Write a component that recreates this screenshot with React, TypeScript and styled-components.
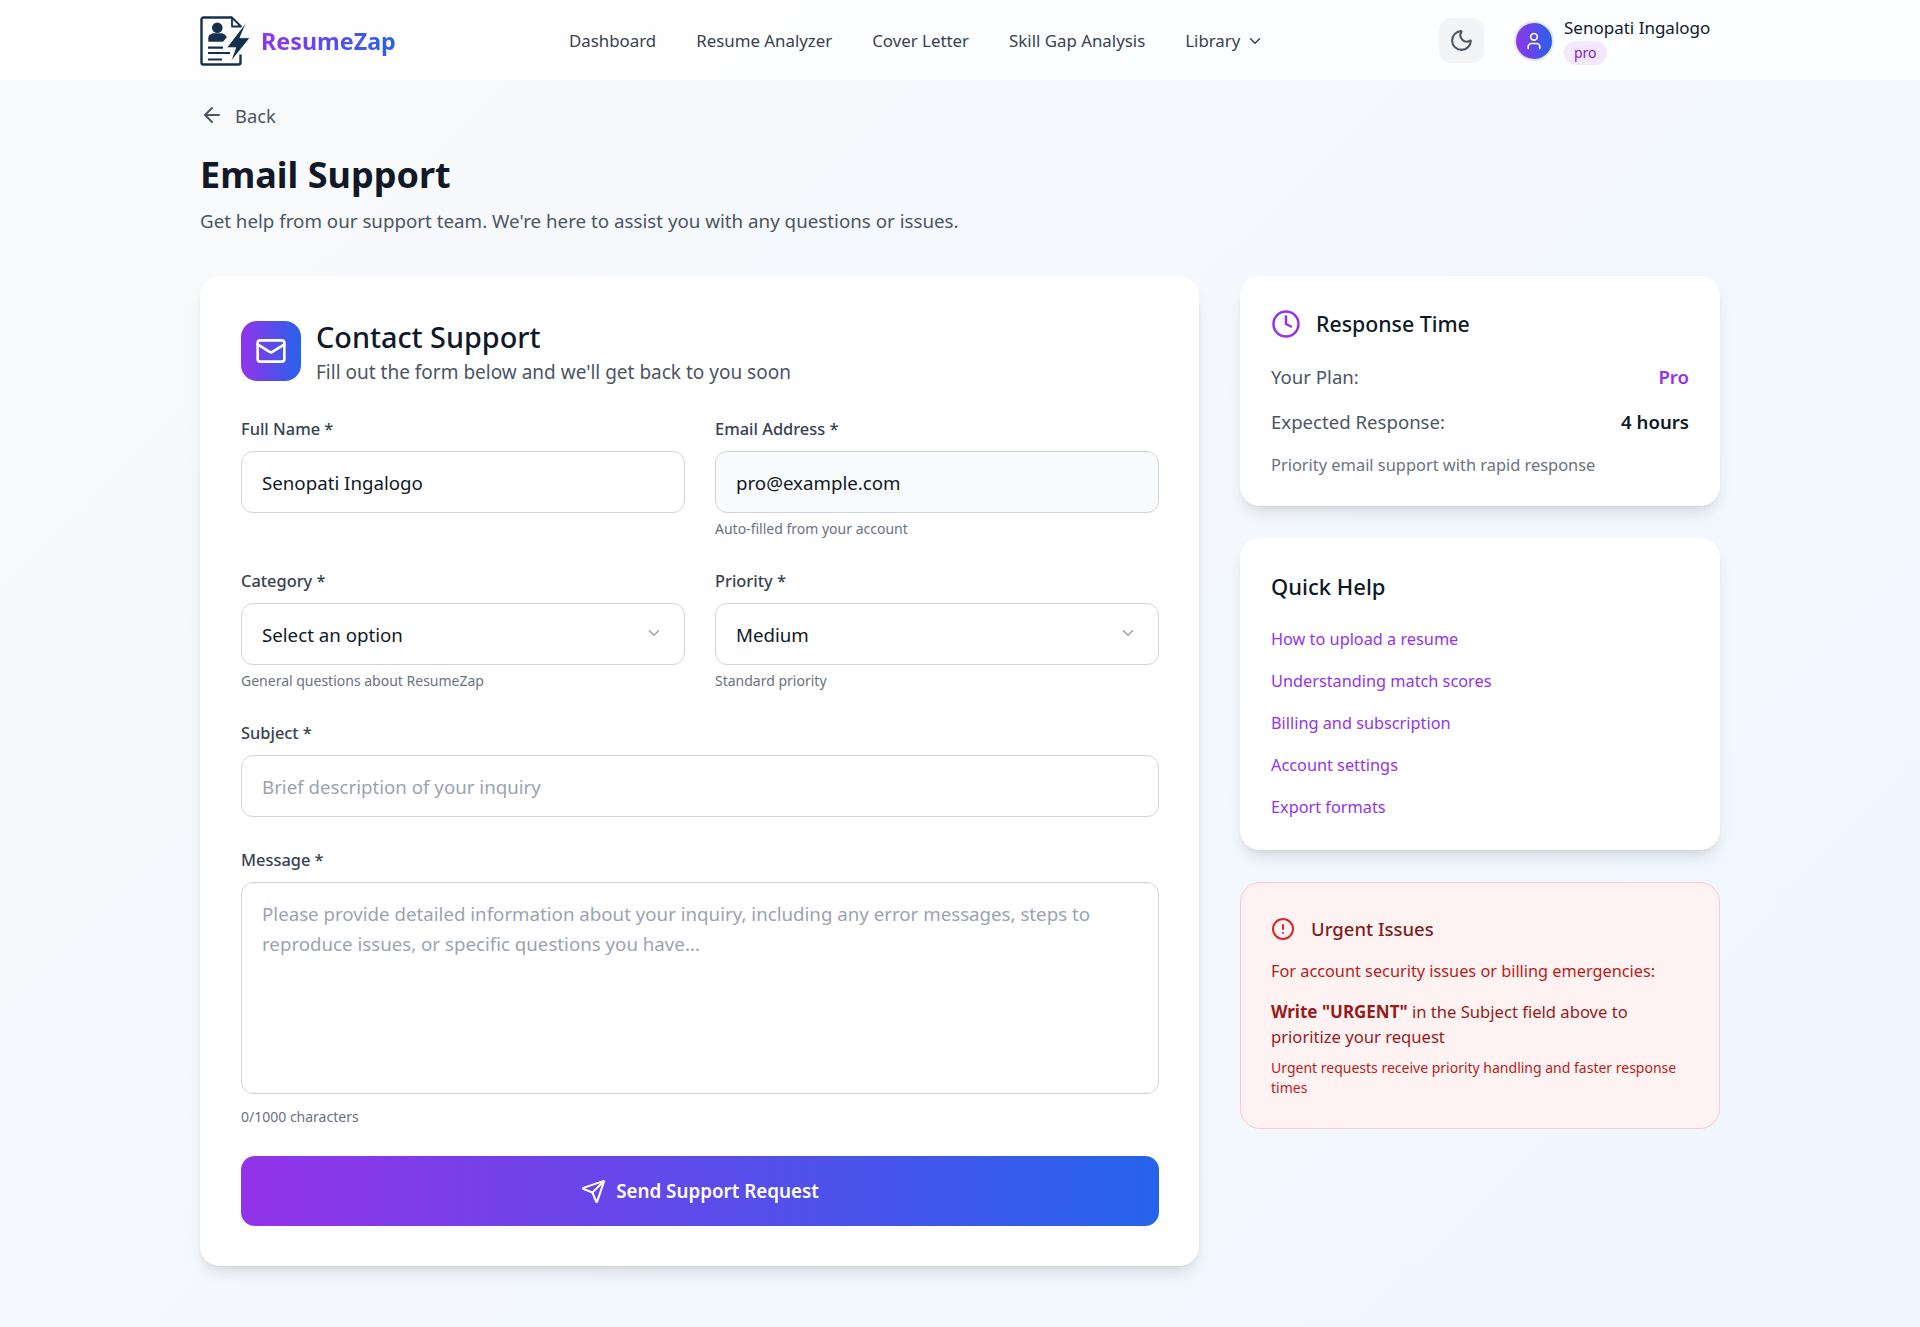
import styled, { createGlobalStyle } from 'styled-components';
import { ArrowLeft, ChevronDown, CircleAlert, Clock, Mail, Moon, Send, User } from 'lucide-react';

const GlobalStyle = createGlobalStyle`
  * { box-sizing: border-box; }
  body {
    margin: 0;
    font-family: 'Noto Sans', 'Open Sans', Arial, sans-serif;
    color: #111827;
  }
`;

const Page = styled.div`
  min-height: 1327px;
  background: linear-gradient(135deg, #f9fafb 0%, #eff6ff 100%);
`;

const Header = styled.header`
  height: 80px;
  background: rgba(255, 255, 255, 0.8);
  display: flex;
  align-items: center;
  padding: 1px 200px 0;
`;

const LogoLink = styled.a`
  display: flex;
  align-items: center;
  gap: 11px;
  width: 369px;
`;

const LogoText = styled.span`
  font-size: 23.3px;
  font-weight: 700;
  background: linear-gradient(90deg, #9333ea, #2563eb);
  -webkit-background-clip: text;
  background-clip: text;
  color: transparent;
`;

const Nav = styled.nav`
  display: flex;
  align-items: center;
  gap: 40px;
  flex: 1;
`;

const NavItem = styled.a`
  display: flex;
  align-items: center;
  gap: 6px;
  font-size: 16.85px;
  color: #374151;
`;

const ThemeButton = styled.button`
  width: 45px;
  height: 45px;
  margin-top: -1px;
  border: none;
  border-radius: 12px;
  background: #f3f4f6;
  color: #4b5563;
  display: flex;
  align-items: center;
  justify-content: center;
  margin-right: 30px;
`;

const UserBox = styled.div`
  display: flex;
  align-items: center;
  gap: 10px;
  width: 206px;
`;

const Avatar = styled.div`
  width: 40px;
  height: 40px;
  border-radius: 50%;
  border: 2px solid #e5e7eb;
  background: linear-gradient(90deg, #9333ea, #2563eb);
  color: #fff;
  display: flex;
  align-items: center;
  justify-content: center;
`;

const UserName = styled.div`
  font-size: 17px;
  line-height: 22px;
  color: #111827;
  white-space: nowrap;
`;

const PlanBadge = styled.span`
  display: inline-block;
  height: 24px;
  line-height: 24px;
  margin-top: 2px;
  padding: 0 10px;
  border-radius: 12px;
  background: #f3e8ff;
  color: #7e22ce;
  font-size: 14px;
`;

const Main = styled.main`
  padding: 20px 200px 0;
`;

const BackLink = styled.a`
  display: flex;
  align-items: center;
  gap: 11px;
  height: 30px;
  font-size: 18.4px;
  color: #4b5563;
`;

const Title = styled.h1`
  margin: 21px 0 0;
  font-size: 36px;
  line-height: 48px;
  font-weight: 700;
  color: #111827;
`;

const Subtitle = styled.p`
  margin: 9px 0 0;
  font-size: 18.75px;
  line-height: 26px;
  color: #4b5563;
`;

const Columns = styled.div`
  display: grid;
  grid-template-columns: 999px 480px;
  gap: 41px;
  margin-top: 42px;
  align-items: start;
`;

const Card = styled.section`
  background: #fff;
  border-radius: 20px;
  box-shadow: 0 10px 15px -3px rgba(0, 0, 0, 0.1), 0 4px 6px -4px rgba(0, 0, 0, 0.1);
`;

const FormCard = styled(Card)`
  height: 990px;
  padding: 45px 40px 0 41px;
`;

const FormHead = styled.div`
  display: flex;
  align-items: center;
  gap: 15px;
  height: 60px;
`;

const IconTile = styled.div`
  width: 60px;
  height: 60px;
  border-radius: 16px;
  background: linear-gradient(90deg, #9333ea, #2563eb);
  color: #fff;
  display: flex;
  align-items: center;
  justify-content: center;
`;

const HeadText = styled.div`
  padding-top: 2px;
`;

const FormTitle = styled.h2`
  margin: 0;
  font-size: 28.8px;
  line-height: 36px;
  font-weight: 500;
  color: #111827;
`;

const FormHint = styled.p`
  margin: 4px 0 0;
  font-size: 19px;
  line-height: 26px;
  color: #4b5563;
`;

const TwoCols = styled.div`
  display: grid;
  grid-template-columns: 1fr 1fr;
  gap: 30px;
`;

const Field = styled.div<{ $height: number }>`
  height: ${(p) => p.$height}px;
`;

const FormBody = styled.div`
  margin-top: 37px;
`;

const Label = styled.label`
  display: block;
  font-size: 16.4px;
  line-height: 22px;
  font-weight: 500;
  color: #374151;
  margin-bottom: 11px;
`;

const inputCss = `
  width: 100%;
  border: 1px solid #d1d5db;
  border-radius: 12px;
  padding: 0 20px;
  font-family: inherit;
  font-size: 18.7px;
  color: #111827;
  outline: none;
  &::placeholder { color: #9ca3af; opacity: 1; }
`;

const Input = styled.input<{ $readOnlyLook?: boolean }>`
  ${inputCss}
  height: 62px;
  background: ${(p) => (p.$readOnlyLook ? '#f9fafb' : '#fff')};
`;

const TextArea = styled.textarea`
  ${inputCss}
  display: block;
  height: 212px;
  padding-top: 16px;
  line-height: 30px;
  resize: none;
`;

const SelectWrap = styled.div`
  position: relative;
`;

const Select = styled.select`
  ${inputCss}
  height: 62px;
  background: #fff;
  appearance: none;
`;

const SelectChevron = styled(ChevronDown)`
  position: absolute;
  right: 22px;
  top: 21px;
  color: #9ca3af;
  pointer-events: none;
`;

const Help = styled.p<{ $gap?: number }>`
  margin: ${(p) => p.$gap ?? 6}px 0 0;
  font-size: 14px;
  line-height: 20px;
  color: #6b7280;
`;

const SubmitButton = styled.button`
  width: 100%;
  height: 70px;
  margin-top: 11px;
  border: none;
  border-radius: 14px;
  background: linear-gradient(90deg, #9333ea, #2563eb);
  color: #fff;
  font-family: inherit;
  font-size: 18.8px;
  font-weight: 600;
  display: flex;
  align-items: center;
  justify-content: center;
  gap: 10px;
`;

const Aside = styled.aside`
  display: flex;
  flex-direction: column;
  gap: 32px;
`;

const SideCard = styled(Card)<{ $bottom: number }>`
  padding: 30px 31px ${(p) => p.$bottom}px;
`;

const SideHead = styled.div`
  display: flex;
  align-items: center;
  gap: 15px;
  color: #9333ea;
`;

const SideTitle = styled.h3<{ $size: number }>`
  margin: 0;
  font-size: ${(p) => p.$size}px;
  line-height: 36px;
  font-weight: 500;
  color: #111827;
`;

const PlanRow = styled.div<{ $gap: number }>`
  display: flex;
  justify-content: space-between;
  font-size: 18.6px;
  line-height: 26px;
  color: #4b5563;
  margin-top: ${(p) => p.$gap}px;
`;

const PlanValue = styled.span<{ $accent?: boolean }>`
  font-weight: 600;
  color: ${(p) => (p.$accent ? '#9333ea' : '#111827')};
`;

const SideNote = styled.p`
  margin: 19px 0 0;
  font-size: 16.4px;
  line-height: 22px;
  color: #6b7280;
`;

const HelpList = styled.ul`
  list-style: none;
  margin: 23px 0 0;
  padding: 0;
  display: flex;
  flex-direction: column;
  gap: 18px;
`;

const HelpLink = styled.a`
  display: block;
  font-size: 16.3px;
  line-height: 24px;
  color: #9333ea;
`;

const UrgentCard = styled.section`
  background: #fef2f2;
  border: 1px solid #fecaca;
  border-radius: 20px;
  padding: 33px 30px 30px;
  color: #b91c1c;
`;

const UrgentHead = styled.div`
  display: flex;
  align-items: center;
  gap: 16px;
  color: #dc2626;
`;

const UrgentTitle = styled.h3`
  margin: 0;
  font-size: 18.5px;
  line-height: 26px;
  font-weight: 500;
  color: #7f1d1d;
`;

const UrgentText = styled.p`
  margin: 17px 0 0;
  font-size: 16.3px;
  line-height: 25px;
  color: #b91c1c;
`;

const UrgentStrong = styled.p`
  margin: 15px 0 0;
  font-size: 16.6px;
  line-height: 25px;
  color: #991b1b;
  strong { font-weight: 700; font-size: 17px; }
`;

const UrgentSmall = styled.p`
  margin: 9px 0 0;
  font-size: 14px;
  line-height: 20px;
  color: #b91c1c;
`;

// logo: resume sheet with a lightning bolt
function Logo() {
  return (
    <svg width="50" height="50" viewBox="0 0 50 50" fill="none">
      <path
        d="M32 1.500H3.500A2 2 0 0 0 1.500 3.500v43a2 2 0 0 0 2 2h35a2 2 0 0 0 2-2v-8"
        stroke="#14304d"
        strokeWidth="2.400"
        strokeLinejoin="round"
      />
      <path d="M32 1.500v9h9L32 1.500z" fill="#fff" stroke="#14304d" strokeWidth="1.800" strokeLinejoin="round" />
      <circle cx="17.300" cy="11.700" r="5.300" fill="#14304d" />
      <path d="M8.300 25.700v-3.500c0-3 3-4.900 6-4.900h6c3.500 0 6 2 6.400 4.200L23 25.700H8.300z" fill="#14304d" />
      <path d="M8 31.700h15M8 37h22M8 43.500h14" stroke="#14304d" strokeWidth="2.200" />
      <path d="M46.700 5.700L26.700 31.700h9L30.700 45.700 50 21.700h-10L46.700 5.700z" fill="#14304d" stroke="#fff" strokeWidth="0.800" />
    </svg>
  );
}

export default function App() {
  return (
    <Page>
      <GlobalStyle />
      <Header>
        <LogoLink>
          <Logo />
          <LogoText>ResumeZap</LogoText>
        </LogoLink>
        <Nav>
          <NavItem>Dashboard</NavItem>
          <NavItem>Resume Analyzer</NavItem>
          <NavItem>Cover Letter</NavItem>
          <NavItem>Skill Gap Analysis</NavItem>
          <NavItem>
            Library <ChevronDown size={18} />
          </NavItem>
        </Nav>
        <ThemeButton>
          <Moon size={25} />
        </ThemeButton>
        <UserBox>
          <Avatar>
            <User size={20} />
          </Avatar>
          <div>
            <UserName>Senopati Ingalogo</UserName>
            <PlanBadge>pro</PlanBadge>
          </div>
        </UserBox>
      </Header>

      <Main>
        <BackLink>
          <ArrowLeft size={24} />
          Back
        </BackLink>
        <Title>Email Support</Title>
        <Subtitle>Get help from our support team. We're here to assist you with any questions or issues.</Subtitle>

        <Columns>
          <FormCard>
            <FormHead>
              <IconTile>
                <Mail size={32} />
              </IconTile>
              <HeadText>
                <FormTitle>Contact Support</FormTitle>
                <FormHint>Fill out the form below and we'll get back to you soon</FormHint>
              </HeadText>
            </FormHead>

            <FormBody>
              <TwoCols>
                <Field $height={152}>
                  <Label>Full Name *</Label>
                  <Input defaultValue="Senopati Ingalogo" />
                </Field>
                <Field $height={152}>
                  <Label>Email Address *</Label>
                  <Input $readOnlyLook defaultValue="pro@example.com" readOnly />
                  <Help>Auto-filled from your account</Help>
                </Field>
              </TwoCols>
              <TwoCols>
                <Field $height={152}>
                  <Label>Category *</Label>
                  <SelectWrap>
                    <Select defaultValue="">
                      <option value="">Select an option</option>
                    </Select>
                    <SelectChevron size={18} />
                  </SelectWrap>
                  <Help>General questions about ResumeZap</Help>
                </Field>
                <Field $height={152}>
                  <Label>Priority *</Label>
                  <SelectWrap>
                    <Select defaultValue="medium">
                      <option value="medium">Medium</option>
                    </Select>
                    <SelectChevron size={18} />
                  </SelectWrap>
                  <Help>Standard priority</Help>
                </Field>
              </TwoCols>
              <Field $height={127}>
                <Label>Subject *</Label>
                <Input placeholder="Brief description of your inquiry" />
              </Field>
              <Field $height={296}>
                <Label>Message *</Label>
                <TextArea placeholder="Please provide detailed information about your inquiry, including any error messages, steps to reproduce issues, or specific questions you have..." />
                <Help $gap={13}>0/1000 characters</Help>
              </Field>
              <SubmitButton>
                <Send size={25} />
                Send Support Request
              </SubmitButton>
            </FormBody>
          </FormCard>

          <Aside>
            <SideCard $bottom={30}>
              <SideHead>
                <Clock size={30} />
                <SideTitle $size={21.3}>Response Time</SideTitle>
              </SideHead>
              <PlanRow $gap={22}>
                Your Plan:
                <PlanValue $accent>Pro</PlanValue>
              </PlanRow>
              <PlanRow $gap={19}>
                Expected Response:
                <PlanValue>4 hours</PlanValue>
              </PlanRow>
              <SideNote>Priority email support with rapid response</SideNote>
            </SideCard>

            <SideCard $bottom={31}>
              <SideTitle $size={22}>Quick Help</SideTitle>
              <HelpList>
                <li><HelpLink>How to upload a resume</HelpLink></li>
                <li><HelpLink>Understanding match scores</HelpLink></li>
                <li><HelpLink>Billing and subscription</HelpLink></li>
                <li><HelpLink>Account settings</HelpLink></li>
                <li><HelpLink>Export formats</HelpLink></li>
              </HelpList>
            </SideCard>

            <UrgentCard>
              <UrgentHead>
                <CircleAlert size={24} />
                <UrgentTitle>Urgent Issues</UrgentTitle>
              </UrgentHead>
              <UrgentText>For account security issues or billing emergencies:</UrgentText>
              <UrgentStrong>
                <strong>Write "URGENT"</strong> in the Subject field above to prioritize your request
              </UrgentStrong>
              <UrgentSmall>Urgent requests receive priority handling and faster response times</UrgentSmall>
            </UrgentCard>
          </Aside>
        </Columns>
      </Main>
    </Page>
  );
}
